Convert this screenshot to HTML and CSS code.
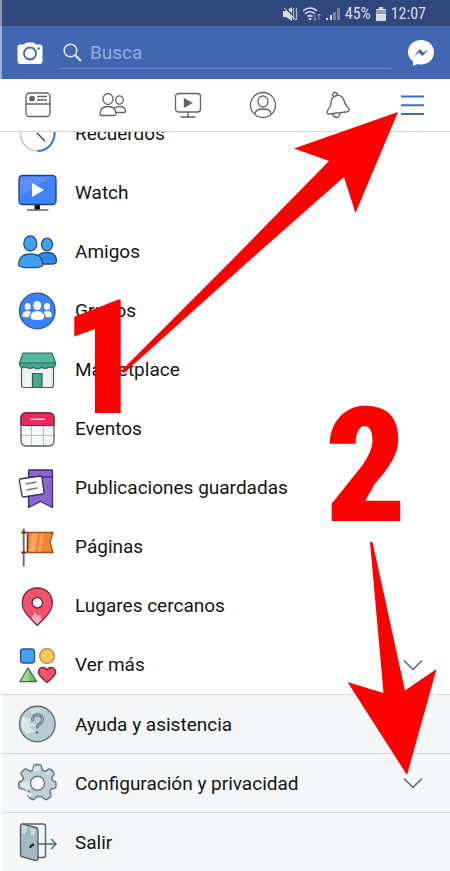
FILE: index.html
```html
<!DOCTYPE html>
<html lang="es">
<head>
    <meta charset="UTF-8">
    <meta name="viewport" content="width=device-width, initial-scale=1.0">
    <title>Facebook - Menú</title>
    <link rel="stylesheet" href="styles.css">
</head>
<body>
<div class="screen">
    <div class="status-bar">
        <svg width="15" height="16" viewBox="0 0 15 16" fill="none" stroke="currentColor">
            <path d="M0 5h3l6-4v14L3 11H0z" fill="currentColor" stroke="none"/>
            <path d="M1 1l13 13" stroke="#2f477a" stroke-width="2"/>
            <path d="M1 2l12 12" stroke-width="1"/>
            <path d="M11 2l-1 2 1 2-1 2 1 2-1 2 1 2M14 2l-1 2 1 2-1 2 1 2-1 2 1 2"/>
        </svg>
        <svg width="18" height="16" viewBox="0 0 18 16" fill="none" stroke="currentColor" stroke-width="1.6">
            <path d="M0 5c4-4 10-4 14 0M2 8c3-3 7-3 10 0M4.500 10.500c2-1.500 3-1.500 5 0"/>
            <circle cx="7" cy="13" r="1.300" fill="currentColor" stroke="none"/>
            <path d="M12 9v5M10.500 12.500l1.500 2 1.500-2M16 14V8M14.500 10L16 8l1.500 2" stroke-width="1" opacity=".5"/>
        </svg>
        <svg width="14" height="16" viewBox="0 0 14 16" fill="currentColor">
            <path d="M0 12h2v2H0zM4 9h2v5H4z"/>
            <path d="M7 6h3v8H7zM11 2h3v12h-3z" opacity=".4"/>
        </svg>
        <span class="status-text">45%</span>
        <svg width="10" height="16" viewBox="0 0 10 16" fill="currentColor">
            <path d="M3 1h4v2h3v12H0V3h3z" opacity=".6"/>
            <path d="M3 1h4v2h3v1H0V3h3z"/><path d="M0 8h10v7H0z"/>
        </svg>
        <span class="status-text">12:07</span>
    </div>

    <header class="top-bar">
        <button class="icon-button" aria-label="Cámara">
            <svg width="26" height="26" viewBox="0 0 26 26">
                <path d="M7 4.500L8.500 3q.5-.5 1.500-.5h6q1 0 1.500.5L19 4.500h4q2.500 0 2.500 2.500v14q0 3-3 3h-19q-3 0-3-3V7q0-2.500 2.500-2.500z" fill="#fff"/>
                <circle cx="13" cy="13.500" r="6" fill="none" stroke="#4267b2" stroke-width="1.800"/>
                <circle cx="21.500" cy="8.500" r="1.300" fill="#4267b2"/>
            </svg>
        </button>
        <label class="search">
            <svg width="19" height="19" viewBox="0 0 19 19" fill="none" stroke="#e6ecf7" stroke-width="1.500">
                <circle cx="7.500" cy="7.500" r="6.300"/><path d="M12 12l6 6" stroke-width="2"/>
            </svg>
            <input type="text" placeholder="Busca" aria-label="Busca">
        </label>
        <button class="icon-button" aria-label="Messenger">
            <svg width="26" height="26" viewBox="0 0 26 26">
                <path d="M13 0c7.300 0 13 5.300 13 12.300S20.300 24.500 13 24.500q-2 0-3.500-.5L5 26v-4.500C2 19.300 0 16.200 0 12.300 0 5.300 5.700 0 13 0z" fill="#fff"/>
                <path d="M6 16l6-7 3.500 3.500L20.500 9.500 14.500 16 11 12.800z" fill="#4267b2"/>
            </svg>
        </button>
    </header>

    <nav class="tabs">
        <a href="#" aria-label="Noticias">
            <svg width="28" height="28" viewBox="0 0 28 28">
                <rect x="2" y="2" width="24" height="23.500" rx="3.500"/><path d="M2 13h24M13 5.500h10M13 9h10"/>
                <circle cx="8" cy="7.500" r="2.200" fill="#5f6368"/>
            </svg>
        </a>
        <a href="#" aria-label="Solicitudes">
            <svg width="28" height="28" viewBox="0 0 28 28">
                <ellipse cx="9" cy="8" rx="5" ry="5.500"/><ellipse cx="20.500" cy="9" rx="3.700" ry="4.200"/>
                <path d="M1 23q0-7.500 8-7.500t8 7.500q0 1.500-2 1.500H3q-2 0-2-1.500zM15.500 17q2-1.500 5-1.500 6 0 6 5 0 1-1.500 1h-8"/>
            </svg>
        </a>
        <a href="#" aria-label="Watch">
            <svg width="28" height="28" viewBox="0 0 28 28">
                <rect x="1.500" y="2.500" width="25" height="18.500" rx="3"/><path d="M14 21v4.500M6.500 26h15"/>
                <path d="M10.500 8v8l7-4z" fill="#5f6368"/>
            </svg>
        </a>
        <a href="#" aria-label="Perfil">
            <svg width="28" height="28" viewBox="0 0 28 28">
                <circle cx="14" cy="14" r="12.500"/><ellipse cx="14" cy="10.500" rx="5" ry="5.500"/>
                <path d="M6 23q0-5 8-5t8 5"/>
            </svg>
        </a>
        <a href="#" aria-label="Notificaciones">
            <svg width="28" height="28" viewBox="0 0 28 28">
                <path d="M12.500 4.500C8.500 5.500 7 8 7 12c0 5-3.500 6-4 9-.2 1.500.5 2.200 2 2l17-2c2.500-.3 3.500-1.500 3-3-.7-2-4-3.500-5-8.500C19 6 17 4 12.500 4.500z"/>
                <path d="M8.500 5q0-3.500 2.500-3.500t2.500 3M8.500 23q1.500 3.500 4 3.500t3.500-4.200"/>
            </svg>
        </a>
        <a href="#" class="active" aria-label="Menú" aria-current="page">
            <svg width="28" height="28" viewBox="0 0 28 28"><path d="M2 5.500h23M2 14.200h23M2 23h23"/></svg>
        </a>
    </nav>

    <main class="menu">
        <a href="#" class="menu-item">
            <svg class="menu-icon" viewBox="0 0 40 40" fill="none">
                <circle cx="19.500" cy="20" r="17" stroke="#c3c9ce" stroke-width="1.500"/>
                <path d="M36.500 17q1 8-5 15-5 5-12 5" stroke="#3578e5" stroke-width="2"/>
                <path d="M19 19l8 8" stroke="#444" stroke-width="1.500"/>
            </svg>
            <span>Recuerdos</span>
        </a>
        <a href="#" class="menu-item">
            <svg class="menu-icon" viewBox="0 0 40 40">
                <path d="M16.500 31h5.500v6h-5.500z" fill="#111"/><path d="M9 37h21.500" stroke="#666" stroke-width="1.500"/>
                <rect x="1" y="2.500" width="37" height="29" rx="3.500" fill="#3d82f6"/>
                <path d="M2 3h33L2 23.500z" fill="#598ff6"/>
                <rect x="1" y="2.500" width="37" height="29" rx="3.500" fill="none" stroke="#244173" stroke-width="1.300"/>
                <path d="M14 10v14l12-7z" fill="#fff"/>
            </svg>
            <span>Watch</span>
        </a>
        <a href="#" class="menu-item">
            <svg class="menu-icon" viewBox="0 0 40 40" fill="#3fa0ee" stroke="#254e86" stroke-width="1.300">
                <ellipse cx="29" cy="12.500" rx="5.500" ry="6.300"/>
                <path d="M20 24q2-3.500 9-3.500 9.500 0 9.500 9 0 2.500-4.500 2.500H24z" fill="#3685ed"/>
                <ellipse cx="12.300" cy="11.500" rx="6.500" ry="7.500"/>
                <path d="M.7 33q0-11 12-11t12 11q0 2.700-12 2.700T.7 33z"/>
            </svg>
            <span>Amigos</span>
        </a>
        <a href="#" class="menu-item">
            <svg class="menu-icon" viewBox="0 0 40 40" fill="#fff">
                <circle cx="19.300" cy="20" r="17.800" fill="#3b82f6" stroke="#2557a6" stroke-width="1.300"/>
                <ellipse cx="9.700" cy="15.500" rx="3" ry="3.500"/><ellipse cx="29" cy="15.500" rx="3" ry="3.500"/>
                <ellipse cx="19.300" cy="14.500" rx="4" ry="4.500"/>
                <path d="M4.500 25q0-5 5-5 2 0 3.500 1-2 2-2 5-6.500.5-6.500-1zM34 25q0-5-5-5-2 0-3.500 1 2 2 2 5 6.500.5 6.500-1zM12.500 26.500q0-6.500 6.800-6.500t6.800 6.500q0 2.500-6.800 2.500t-6.800-2.500z"/>
            </svg>
            <span>Grupos</span>
        </a>
        <a href="#" class="menu-item">
            <svg class="menu-icon" viewBox="0 0 40 40" stroke-width="1.200">
                <path d="M3.500 15h32v20q0 2.500-2.500 2.500H6q-2.500 0-2.500-2.500z" fill="#f0f1f2" stroke="#555"/>
                <path d="M14.500 37.500v-14H24v14z" fill="#43a88c" stroke="#2b5f52"/>
                <path d="M5 3h29l3.500 10v2a4.600 4 0 0 1-7 2 4.600 4 0 0 1-7 0 4.600 4 0 0 1-8 0 4.600 4 0 0 1-7 0 4.600 4 0 0 1-7-2v-2z" fill="#43a88c" stroke="#2b6b5c"/>
                <path d="M5.500 4h28l3 8.500h-34z" fill="#55bba0"/>
                <path d="M1.500 13h36" stroke="#2b6b5c"/>
            </svg>
            <span>Marketplace</span>
        </a>
        <a href="#" class="menu-item">
            <svg class="menu-icon" viewBox="0 0 40 40" fill="none">
                <rect x="3" y="4" width="33" height="33" rx="5" fill="#f5f6f7"/>
                <path d="M3 16.500V9q0-5 5-5h23q5 0 5 5v7.500z" fill="#e82b59"/>
                <path d="M13.500 17v20M25.500 17v20M3 26.500h33" stroke="#b9bcc4"/>
                <path d="M3 16.500h33" stroke="#7d1f3f"/>
                <path d="M12.500 10.300h14" stroke="#fff" stroke-width="1.500"/>
                <rect x="3" y="4" width="33" height="33" rx="5" stroke="#5b5872" stroke-width="1.300"/>
                <path d="M3 16V9q0-5 5-5h23q5 0 5 5v7" stroke="#8d1a3e" stroke-width="1.300"/>
            </svg>
            <span>Eventos</span>
        </a>
        <a href="#" class="menu-item">
            <svg class="menu-icon" viewBox="0 0 40 40" stroke="#3c2c63" stroke-width="1.300" stroke-linejoin="round">
                <path d="M11.500 2h22q1 0 1 1v36.500l-12-6-12 6V3q0-1 1-1z" fill="#8a68cb"/>
                <path d="M10.500 9h24"/>
                <path d="M2 11l20-3q1.500 0 1.800 1.200L26 24q0 1.500-1.200 2L6 29q-1.800 0-2-1.200L1.300 12.500z" fill="#fff"/>
                <path d="M7.500 16l11-2M8.500 22l11-2" stroke="#777"/>
            </svg>
            <span>Publicaciones guardadas</span>
        </a>
        <a href="#" class="menu-item">
            <svg class="menu-icon" viewBox="0 0 40 40">
                <path d="M9 5.500h26L32 15l3 10.500H9z" fill="#f58431"/>
                <path d="M14 6h6l-3 19h-6zM23 6h3l-3 19h-3z" fill="#fba45c"/>
                <path d="M9.500 6v19" stroke="#66340f" stroke-width="1.500"/>
                <path d="M3 5.500h32L32 15l3 10.500H3" fill="none" stroke="#a54a19" stroke-width="1.300"/>
                <path d="M5.700 1.500v38" stroke="#666" stroke-width="1.800"/>
                <path d="M4 5.500h4M4 25.500h4" stroke="#7c2d20" stroke-width="2"/>
            </svg>
            <span>Páginas</span>
        </a>
        <a href="#" class="menu-item">
            <svg class="menu-icon" viewBox="0 0 40 40">
                <path d="M19.300 2c9 0 15 6.500 15 15S26 32 19.300 39.500C12.500 32 4.300 25.500 4.300 17S10.300 2 19.300 2z" fill="#f4516c"/>
                <path d="M13 33l4-7 3 4 2-2 2 6-4.700 5.500z" fill="#f5a9b5"/>
                <path d="M12.500 32.500C8 27.500 4.300 24 4.300 17c0-8.500 6-15 15-15s15 6.500 15 15c0 7-3.700 10.500-8.200 15.500l-6.800 7z" fill="none" stroke="#7b2338" stroke-width="1.300"/>
                <circle cx="19.300" cy="16.700" r="5.200" fill="#fff" stroke="#7b2338" stroke-width="1.500"/>
            </svg>
            <span>Lugares cercanos</span>
        </a>
        <a href="#" class="menu-item">
            <svg class="menu-icon" viewBox="0 0 40 40" stroke-width="1.400" stroke-linejoin="round">
                <rect x="2.500" y="4" width="14" height="14" rx="3" fill="#45a1ed" stroke="#24568b"/>
                <circle cx="29" cy="11" r="7.300" fill="#fcc95a" stroke="#c18a3e"/>
                <path d="M10 23l8.500 13.500H2z" fill="#7cc365" stroke="#426e3d"/>
                <path d="M10 24l1 12H3z" fill="#a8d795" stroke="none"/>
                <path d="M29 37.500c-3-3-8.500-6-8.500-10.500 0-5 6.500-6 8.500-2 2-4 8.500-3 8.500 2 0 4.500-5.500 7.500-8.500 10.500z" fill="#f4516c" stroke="#7b2338"/>
            </svg>
            <span>Ver más</span>
            <svg class="chevron" viewBox="0 0 20 12"><path d="M1 1.500l9 9 9-9"/></svg>
        </a>
        <div class="menu-footer">
            <a href="#" class="menu-item">
                <svg class="menu-icon" viewBox="0 0 40 40" fill="none">
                    <circle cx="19.300" cy="20" r="17.800" fill="#b9cbd3"/>
                    <path d="M4 12l11 4-6 2 10 3-8 2 6 4-9 3-5-8z" fill="#dce6ea"/>
                    <path d="M11 5l9-1 4 3-11 3z" fill="#cedbe1"/>
                    <circle cx="19.300" cy="20" r="17.800" stroke="#5d7078" stroke-width="1.400"/>
                    <path d="M14.500 16c0-7 10-7 10 0 0 4-5 3.500-5 7" stroke="#596b73" stroke-width="2.800" stroke-linecap="round"/>
                    <path d="M14.500 16c0-7 10-7 10 0 0 4-5 3.500-5 7" stroke="#b9cbd3" stroke-width="1" stroke-linecap="round"/>
                    <circle cx="19" cy="28.500" r="1.300" fill="#596b73"/>
                </svg>
                <span>Ayuda y asistencia</span>
            </a>
            <a href="#" class="menu-item">
                <svg class="menu-icon" viewBox="0 0 40 40" stroke="#65757d" stroke-width="1.400" stroke-linejoin="round">
                    <path d="M15.500 3.500q.3-2 2-2h4q1.700 0 2 2l.7 3.500 3 1.300 3-2q1.500-1 2.800.2l2.500 2.500q1.200 1.300.2 2.800l-2 3 1.300 3 2 .7q1 .5 1 2v3q0 1.700-1.800 2l-3 .5-1.300 2.500 1 3.500q.4 1.500-1 2.300l-3 2q-1.400.7-2.600-.5l-2.300-2.300h-5l-2.300 2.300q-1.200 1.200-2.600.5l-3-2q-1.400-.8-1-2.300l1-3.500L5.500 26l-3-.5q-1.800-.3-1.800-2v-3q0-1.700 1-2l2.500-.7 1.300-3-2-3q-1-1.500.2-2.800l2.500-2.500Q7.500 5.300 9 6.300l3 2L15 7z" fill="#c1d0d7"/>
                    <path d="M3 20l9-3 1 6-4 5 6 4-4 2-2-3-1-4-5-3zM16 4h7l-3 4h-5zM27 10l5-2-1 4z" fill="#dce5e9" stroke="none"/>
                    <circle cx="19.500" cy="20.300" r="7" fill="#f8fafb"/>
                </svg>
                <span>Configuración y privacidad</span>
                <svg class="chevron" viewBox="0 0 20 12"><path d="M1 1.500l9 9 9-9"/></svg>
            </a>
            <a href="#" class="menu-item">
                <svg class="menu-icon" viewBox="0 0 40 40" fill="none" stroke="#52656d" stroke-width="1.400">
                    <path d="M5 2h20q2.500 0 2.500 2.500V33q0 2.500-2.500 2.500h-5"/>
                    <path d="M2.500 4q0-2.500 2.500-2l13 3.500q2 .5 2 2.500v28.500q0 2.500-2.500 2L5 35q-2.500-.5-2.500-2.500z" fill="#a3b8c0"/>
                    <path d="M4 3l5 1.300v5l-3 3-2-1zM12 5.500l5 2v5l-4 1z" fill="#ccd8dd" stroke="none"/>
                    <path d="M12 26q.5-3 4-3.500" stroke="#222" stroke-width="1.800"/>
                    <path d="M20 22h18M33 17l5 5-5 5"/>
                </svg>
                <span>Salir</span>
            </a>
        </div>
    </main>

    <!-- Pasos del tutorial sobre la pantalla -->
    <svg class="arrows" width="450" height="871" viewBox="0 0 450 871" fill="#f00" aria-hidden="true">
        <path d="M398 112L294 148.500 329 161 232 260 121 371 124 373 250 260 344 177 355.500 213z"/>
        <path d="M370 542h2.500L405 690.500 436.500 669 407 775 347.500 682 383.500 693z"/>
    </svg>
    <span class="step step-one">1</span>
    <span class="step step-two">2</span>
</div>
</body>
</html>
```
FILE: styles.css
```css
:root {
    --status-color: #2f477a;
    --primary-color: #4267b2;
    --text-color: #141414;
    --icon-color: #5f6368;
    --line-color: #d3d6da;
    --footer-color: #f4f6f8;
}
* {
    box-sizing: border-box;
}
body {
    margin: 0;
    background-color: #fff;
    color: var(--text-color);
    font-family: Roboto, sans-serif;
}
.screen {
    position: relative;
    overflow: hidden;
}
.status-bar {
    display: flex;
    align-items: center;
    justify-content: flex-end;
    gap: 5px;
    height: 26px;
    padding: 2px 24px 0 0;
    border-left: 2px solid #8c9ab8;
    background-color: var(--status-color);
    color: #d5dcea;
}
.status-text {
    font-family: "Roboto Condensed", Roboto, sans-serif;
    font-size: 16px;
    line-height: 24px;
}
.top-bar {
    display: flex;
    align-items: center;
    gap: 17px;
    height: 53px;
    padding: 0 16px 0 15px;
    border-left: 2px solid #a0b3d8;
    background-color: var(--primary-color);
}
.icon-button {
    display: flex;
    padding: 0;
    border: 0;
    background: none;
    cursor: pointer;
}
.search {
    display: flex;
    flex: 1;
    align-items: center;
    gap: 8px;
    height: 32px;
    padding-left: 3px;
    border-bottom: 1px solid #6582c1;
}
.search input {
    flex: 1;
    min-width: 0;
    padding: 0;
    border: 0;
    outline: 0;
    background: none;
    color: #fff;
    font-family: inherit;
    font-size: 19px;
}
.search input::placeholder {
    color: #92ace0;
    opacity: 1;
}
.tabs {
    display: flex;
    height: 53px;
    border-bottom: 1px solid var(--line-color);
}
.tabs a {
    display: flex;
    flex: 1;
    align-items: center;
    justify-content: center;
}
.tabs svg {
    fill: none;
    stroke: var(--icon-color);
    stroke-width: 1.3;
}
.tabs .active svg {
    stroke: #416cbd;
    stroke-width: 2;
}
.menu {
    overflow: hidden;
}
.menu-item {
    display: flex;
    align-items: center;
    gap: 17px;
    height: 59px;
    padding: 0 27px 0 18px;
    color: var(--text-color);
    font-size: 19px;
    text-decoration: none;
}
/* la lista aparece desplazada bajo las pestañas */
.menu-item:first-child {
    margin-top: -28px;
}
.menu-icon {
    width: 40px;
    height: 40px;
}
.menu-item .chevron {
    width: 20px;
    height: 12px;
    margin-left: auto;
    fill: none;
    stroke: #5b6166;
    stroke-width: 1.4;
}
.menu-footer {
    margin-left: 2px;
    background-color: var(--footer-color);
}
.menu-footer .menu-item {
    margin-top: 0;
    padding-left: 16px;
    border-top: 1px solid var(--line-color);
}
.arrows {
    position: absolute;
    top: 0;
    left: 0;
}
.step {
    position: absolute;
    color: #f00;
    font-family: Impact, "Roboto Condensed", Roboto, sans-serif;
    font-size: 160px;
    font-weight: 900;
    line-height: 160px;
}
.step-one {
    top: 279px;
    left: 62px;
}
.step-two {
    top: 387px;
    left: 325px;
}
```
